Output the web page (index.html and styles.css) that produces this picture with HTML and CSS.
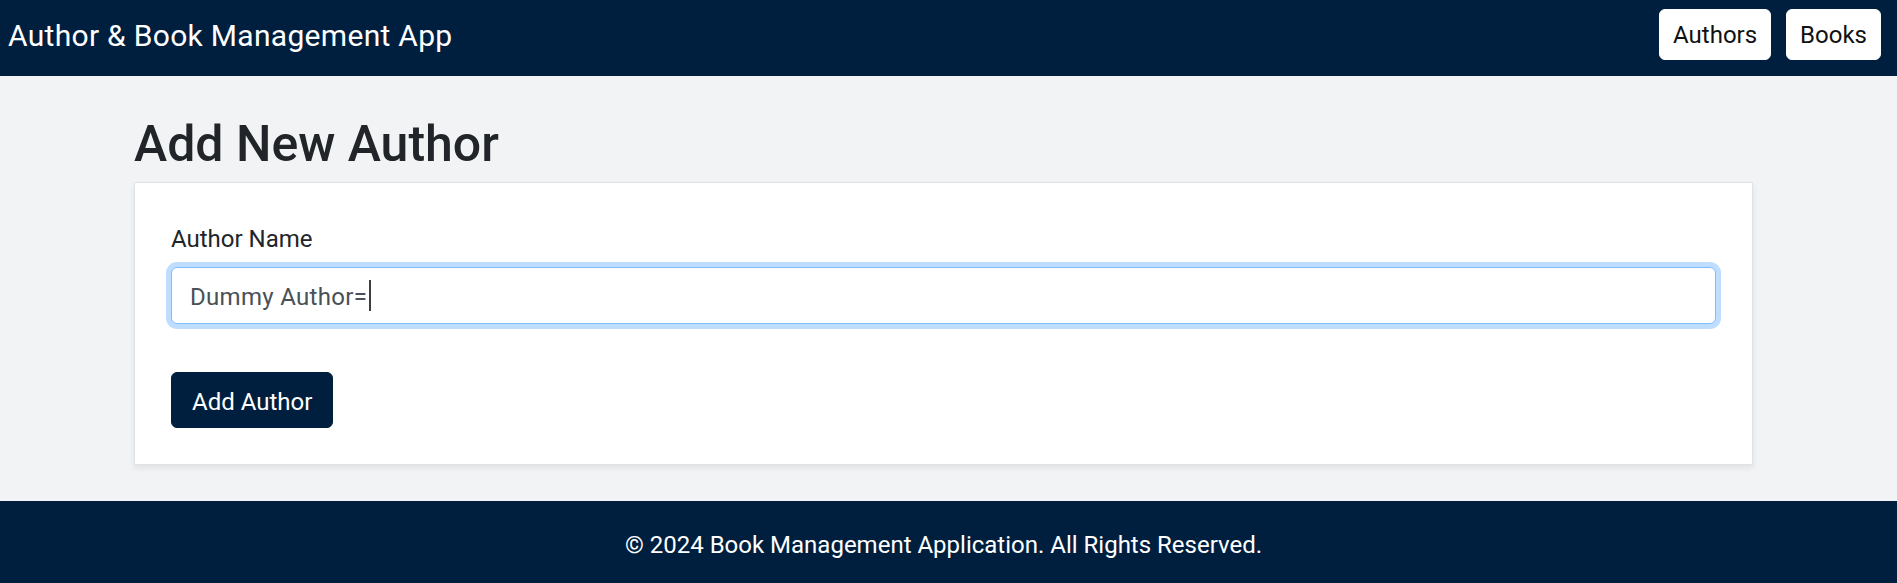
FILE: index.html
```html
<!DOCTYPE html>
<html lang="en">
<head>
<meta charset="utf-8">
<title>Author &amp; Book Management App</title>
<link rel="stylesheet" href="styles.css">
</head>
<body>
  <header class="navbar">
    <span class="brand">Author &amp; Book Management App</span>
    <nav class="nav">
      <a class="nav-btn" href="#">Authors</a>
      <a class="nav-btn" href="#">Books</a>
    </nav>
  </header>

  <main class="main">
    <div class="container">
      <h2 class="page-title">Add New Author</h2>
      <form class="card">
        <div class="form-group">
          <label class="label" for="authorName">Author Name</label>
          <div class="input is-focused" id="authorName" role="textbox">
            <span class="input-value">Dummy Author=</span><span class="caret"></span>
          </div>
        </div>
        <button class="btn-primary" type="button">Add Author</button>
      </form>
    </div>
  </main>

  <footer class="footer">
    <p class="footer-text">© 2024 Book Management Application. All Rights Reserved.</p>
  </footer>
</body>
</html>
```

FILE: styles.css
```css
* {
  box-sizing: border-box;
}

html, body {
  margin: 0;
  padding: 0;
}

body {
  font-family: Roboto, "Liberation Sans", sans-serif;
  font-size: 24px;
  line-height: 36px;
  color: #212529;
  background: #f2f3f5;
  min-height: 583px;
  display: flex;
  flex-direction: column;
}

.navbar {
  height: 76px;
  background: #001f3f;
  display: flex;
  align-items: center;
  justify-content: space-between;
  padding: 0 16px 7px 8px;
}

.brand {
  color: #ffffff;
  font-size: 30px;
  line-height: 36px;
  letter-spacing: 0.3px;
  margin-top: 2px;
}

.nav {
  display: flex;
  gap: 15px;
}

.nav-btn {
  display: block;
  background: #ffffff;
  color: #111111;
  text-decoration: none;
  font-size: 24px;
  line-height: 36px;
  padding: 7px 13px 6px;
  border: 1px solid #ffffff;
  border-radius: 6px;
}

.main {
  flex: 1;
  padding-right: 10px;
}

.container {
  max-width: 1619px;
  margin: 0 auto;
}

.page-title {
  margin: 38px 0 8px;
  font-size: 50px;
  line-height: 60px;
  font-weight: 500;
  color: #212529;
}

.card {
  background: #ffffff;
  border: 1px solid #dfe2e6;
  box-shadow: 0 3px 6px rgba(0, 0, 0, 0.075);
  padding: 36px;
  margin: 0 0 36px;
}

.form-group {
  margin-bottom: 48px;
}

.label {
  display: block;
  padding-top: 2px;
  margin-bottom: 10px;
  line-height: 36px;
}

.input {
  height: 57px;
  padding: 11px 18px 8px;
  border: 1px solid #ced4da;
  border-radius: 6px;
  background: #ffffff;
  color: #495057;
  line-height: 36px;
  display: flex;
  align-items: flex-start;
}

.input-value {
  letter-spacing: 0.3px;
}

.input.is-focused {
  border-color: #80bdff;
  box-shadow: 0 0 0 5px #bfdeff;
}

.caret {
  display: inline-block;
  width: 2px;
  height: 31px;
  background: #3a3f44;
  margin-left: 2px;
  margin-top: 1px;
}

.btn-primary {
  display: block;
  font-family: inherit;
  font-size: 24px;
  line-height: 36px;
  height: 56px;
  padding: 11px 20px 7px;
  background: #001f3f;
  color: #ffffff;
  border: 1px solid #001f3f;
  border-radius: 6px;
}

.footer {
  background: #001f3f;
  color: #ffffff;
  padding: 26px 10px 22px 0;
}

.footer-text {
  margin: 0;
  text-align: center;
  line-height: 36px;
}
```
